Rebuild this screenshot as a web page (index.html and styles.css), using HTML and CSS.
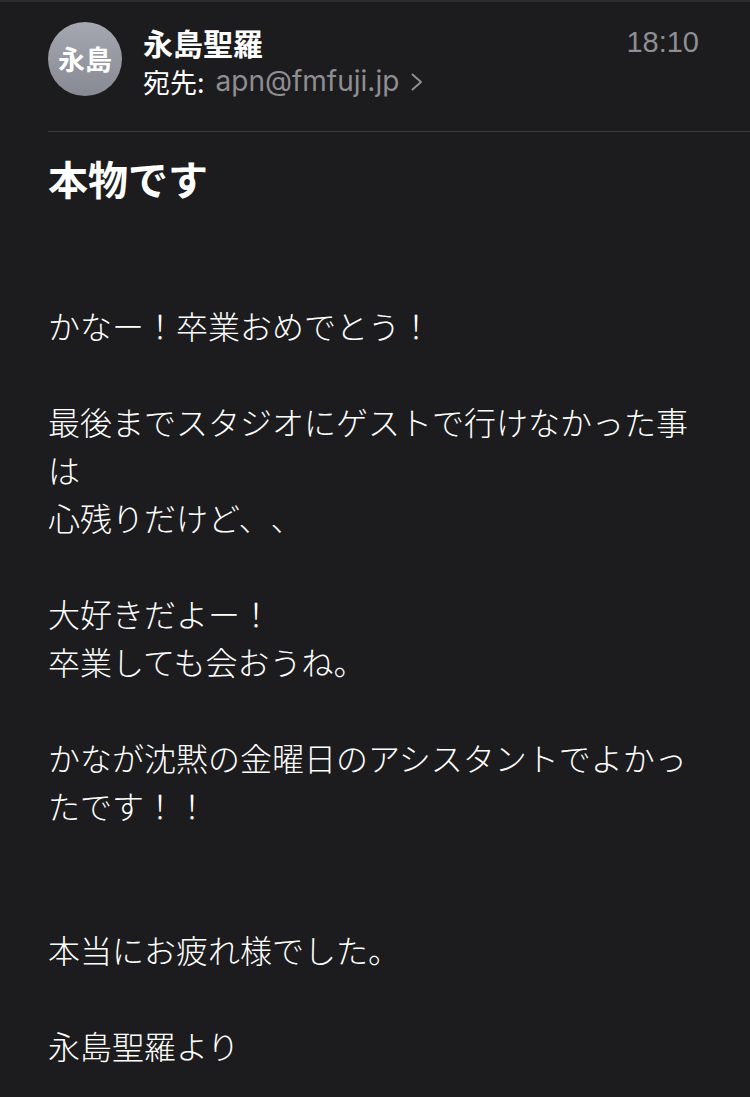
FILE: index.html
```html
<!DOCTYPE html>
<html lang="ja">
<head>
<meta charset="utf-8">
<link rel="stylesheet" href="styles.css">
</head>
<body>
<div class="topline"></div>
<header class="header">
  <div class="head-row">
    <div class="avatar">永島</div>
    <div class="meta">
      <div class="name-row">
        <span class="name">永島聖羅</span>
        <span class="time">18:10</span>
      </div>
      <div class="to-row">
        <span class="to-label">宛先:</span>
        <span class="to-addr">apn@fmfuji.jp</span>
        <svg class="chev" width="14" height="20" viewBox="0 0 14 20"><polyline points="2.5,2.5 11,10 2.5,17.5" fill="none" stroke="#8e8e93" stroke-width="2" stroke-linecap="round" stroke-linejoin="round"/></svg>
      </div>
    </div>
  </div>
  <div class="divider"></div>
</header>
<main class="mail">
  <h1 class="subject">本物です</h1>
  <div class="body">
    <p>かなー！卒業おめでとう！</p>
    <p>最後までスタジオにゲストで行けなかった事は<br>心残りだけど、、</p>
    <p>大好きだよー！<br>卒業しても会おうね。</p>
    <p class="gap2">かなが沈黙の金曜日のアシスタントでよかったです！！</p>
    <p>本当にお疲れ様でした。</p>
    <p>永島聖羅より</p>
  </div>
</main>
</body>
</html>
```

FILE: styles.css
```css
html, body {
  margin: 0;
  padding: 0;
  background: #1c1c1e;
}
body {
  font-family: "Noto Sans CJK JP", sans-serif;
  color: #ffffff;
  width: 750px;
  height: 1097px;
  overflow: hidden;
  text-spacing-trim: space-all;
}
.topline {
  height: 2px;
  background: #2c2c2e;
}
.header {
  padding: 20px 0 0 48px;
}
.head-row {
  display: flex;
  align-items: flex-start;
}
.avatar {
  width: 74px;
  height: 74px;
  border-radius: 50%;
  background: linear-gradient(#a5a8b0, #878a92);
  color: #fff;
  font-weight: 700;
  font-size: 27px;
  line-height: 74px;
  text-align: center;
  flex: none;
}
.meta {
  flex: 1;
  margin-left: 21px;
  padding-right: 51px;
}
.name-row {
  display: flex;
  justify-content: space-between;
  align-items: center;
  height: 40px;
}
.name {
  font-size: 30px;
  font-weight: 700;
  line-height: 40px;
}
.time {
  font-family: "Liberation Sans", "Noto Sans", sans-serif;
  font-size: 29px;
  color: #8e8e93;
  line-height: 40px;
}
.to-row {
  display: flex;
  align-items: center;
  height: 38px;
}
.to-label {
  font-size: 27px;
  color: #fff;
  margin-right: 11px;
}
.to-addr {
  font-family: "Inter", "Liberation Sans", sans-serif;
  font-size: 28px;
  color: #8e8e93;
}
.chev {
  margin-left: 11px;
  margin-top: 2px;
}
.divider {
  height: 1px;
  background: #3a3a3c;
  margin-top: 31px;
}
.mail {
  padding: 0 48px;
}
.subject {
  margin: 22px 0 0;
  font-size: 40px;
  font-weight: 700;
  line-height: 48px;
}
.body {
  margin-top: 99px;
  font-size: 32px;
  font-weight: 300;
  line-height: 48px;
}
.body p {
  margin: 0 0 48px;
}
.body p.gap2 {
  margin-bottom: 96px;
}
```
